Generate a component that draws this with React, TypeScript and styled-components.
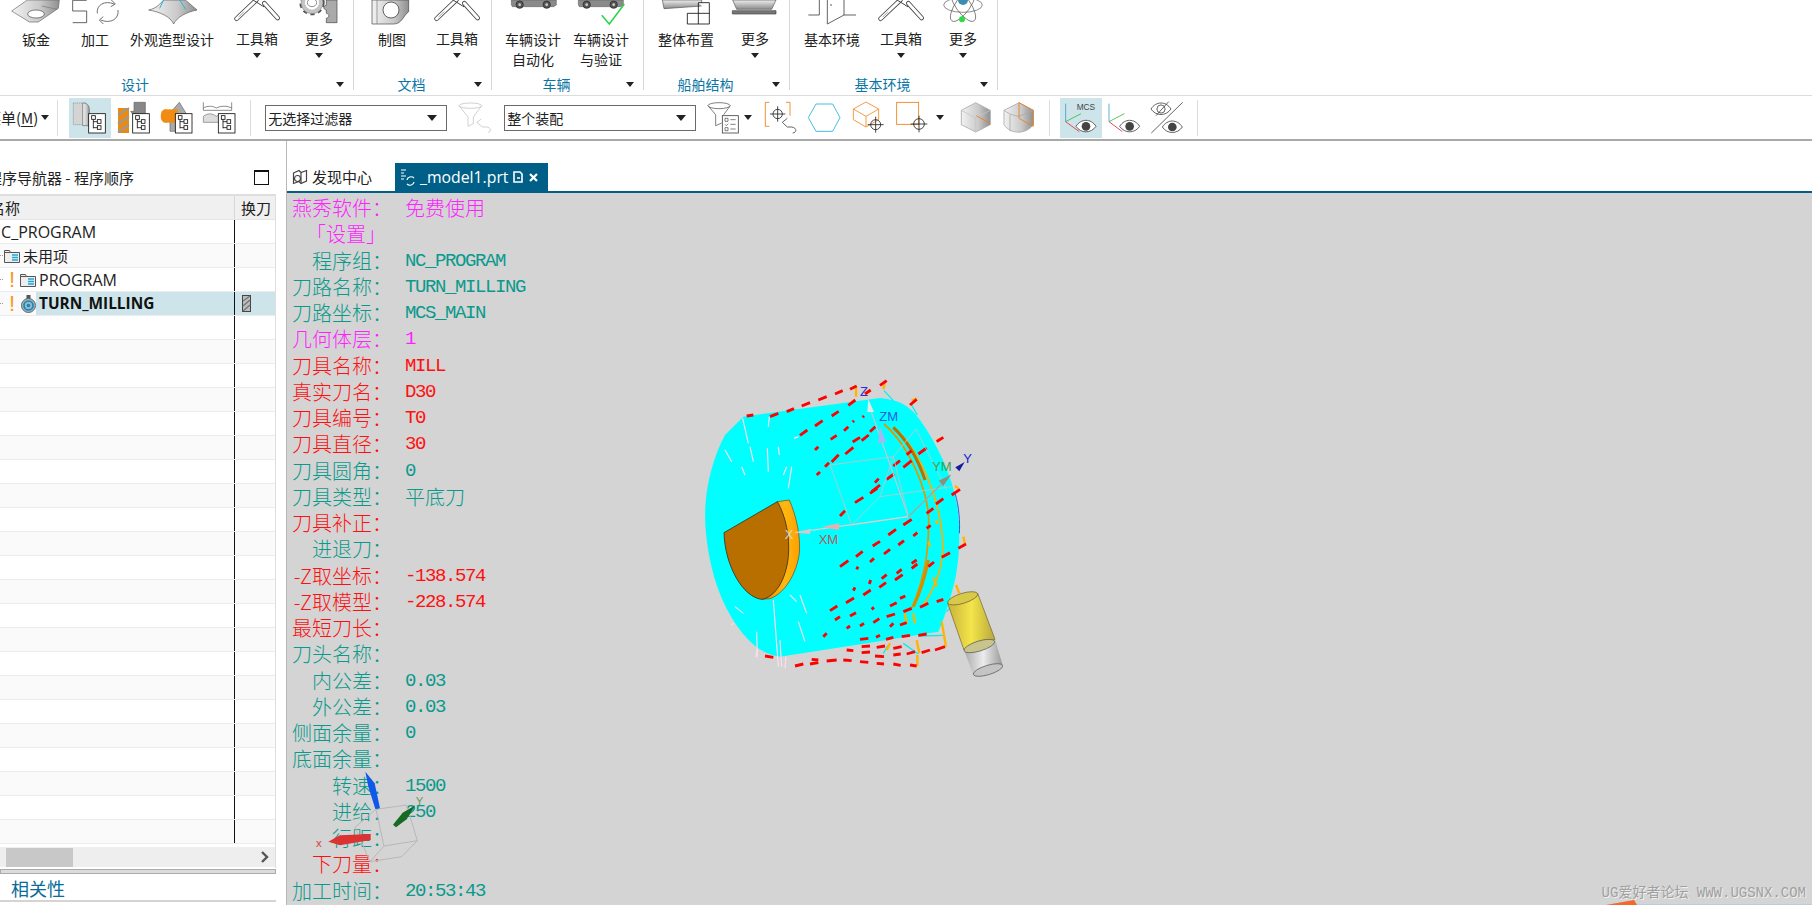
import React from "react";
import styled, { createGlobalStyle } from "styled-components";

const CJK = `"Noto Sans CJK SC", "Noto Sans", sans-serif`;
const UI = `"Open Sans", "Noto Sans CJK SC", sans-serif`;

const Global = createGlobalStyle`
  html, body { margin: 0; padding: 0; background: #fff; overflow: hidden; }
  body { font-family: ${UI}; color: #222; }
`;

const Page = styled.div`
  width: 1812px; height: 905px; overflow: hidden; display: flex; flex-direction: column; background: #fff;
`;

/* ---------- ribbon ---------- */
const Ribbon = styled.div`
  flex: none; height: 95px; display: flex; align-items: flex-start; border-bottom: 1px solid #dcdcdc; overflow: hidden;
`;
const Group = styled.section<{ $w: number; $shift?: number }>`
  flex: none; width: ${(p) => p.$w}px; height: 90px; margin-left: ${(p) => p.$shift ?? 0}px;
  border-right: 1px solid #d6d6d6; box-sizing: border-box; display: flex; flex-direction: column;
`;
const Items = styled.div<{ $pad?: number }>`
  flex: none; height: 74px; display: flex; padding-left: ${(p) => p.$pad ?? 0}px;
`;
const Item = styled.div<{ $w: number; $drop?: boolean }>`
  flex: none; width: ${(p) => p.$w}px; display: flex; flex-direction: column; align-items: center;
  font: 14px/20px ${CJK}; color: #222; white-space: nowrap; text-align: center;
  & > svg { flex: none; margin-bottom: ${(p) => (p.$drop ? -2 : -1)}px; }
`;
const Caret = styled.i<{ $mt?: number }>`
  display: block; width: 0; height: 0; margin-top: ${(p) => p.$mt ?? 5}px;
  border-left: 4px solid transparent; border-right: 4px solid transparent; border-top: 5px solid #222;
`;
const GroupFoot = styled.div`
  flex: none; height: 20px; display: flex; align-items: center;
`;
const GroupName = styled.div`
  flex: 1; text-align: center; font: 14px/20px ${CJK}; color: #0a76a6;
`;
const FootCaret = styled.div`
  flex: none; width: 22px; display: flex; justify-content: center; padding-right: 4px; box-sizing: border-box;
`;

/* ---------- toolbar ---------- */
const Toolbar = styled.div`
  flex: none; height: 43px; display: flex; align-items: center; border-bottom: 2px solid #a9a9a9;
`;
const MenuLabel = styled.div`
  flex: none; margin-left: -14px; font: 15px/20px ${CJK}; color: #222; white-space: nowrap;
  u { text-underline-offset: 2px; }
`;
const Sep = styled.div<{ $l: number; $r: number }>`
  flex: none; width: 1px; height: 36px; background: #dcdcdc; margin: 0 ${(p) => p.$r}px 0 ${(p) => p.$l}px;
`;
const ToolBtn = styled.div<{ $on?: boolean; $ml?: number }>`
  flex: none; width: 42px; height: 40px; margin-left: ${(p) => p.$ml ?? 0}px;
  background: ${(p) => (p.$on ? "#cce4ea" : "transparent")};
`;
const Select = styled.div<{ $w: number; $ml: number }>`
  flex: none; width: ${(p) => p.$w}px; height: 26px; margin-left: ${(p) => p.$ml}px; box-sizing: border-box;
  border: 1px solid #6a6a6a; display: flex; align-items: center; justify-content: space-between;
  padding: 0 9px 0 2px; font: 14px/20px ${CJK}; color: #222;
`;
const SelCaret = styled.i`
  display: block; width: 0; height: 0; border-left: 5px solid transparent; border-right: 5px solid transparent; border-top: 6px solid #222;
`;
const ToolCaret = styled.i<{ $ml: number; $mr: number }>`
  flex: none; width: 0; height: 0; margin: 0 ${(p) => p.$mr}px 0 ${(p) => p.$ml}px;
  border-left: 4px solid transparent; border-right: 4px solid transparent; border-top: 5px solid #222;
`;

/* ---------- body ---------- */
const Body = styled.div`
  flex: 1; min-height: 0; display: flex;
`;
const LeftPanel = styled.aside`
  flex: none; width: 276px; margin-right: 10px; display: flex; flex-direction: column;
`;
const TitleRow = styled.div`
  flex: none; height: 53px; display: flex; align-items: flex-end; justify-content: space-between; padding-bottom: 6px; box-sizing: border-box;
`;
const PanelTitle = styled.div`
  margin-left: -13px; font: 15px/20px ${CJK}; color: #222; white-space: nowrap;
`;
const Maximize = styled.i`
  display: block; width: 13px; height: 12px; margin: 0 7px 3px 0; border: 1px solid #111; border-top-width: 2px;
`;
const Table = styled.div`
  flex: none; height: 674px; box-sizing: border-box; border-top: 2px solid #dedede; border-right: 1px solid #dedede; display: flex; flex-direction: column;
`;
const Header = styled.div`
  flex: none; height: 24px; display: flex; background: #f0f0f0; font: 15px/24px ${CJK}; color: #222; border-bottom: 1px solid #e4e4e4; box-sizing: border-box;
`;
const HeadName = styled.div`
  flex: none; width: 234px; border-right: 1px solid #d8d8d8; overflow: hidden;
  span { margin-left: -10px; display: inline-block; }
`;
const HeadCol = styled.div`
  flex: 1; padding-left: 6px; white-space: nowrap;
`;
const Rows = styled.div`
  flex: none; display: flex; flex-direction: column;
`;
const Row = styled.div<{ $alt: boolean }>`
  flex: none; height: 24px; box-sizing: border-box; display: flex; border-bottom: 1px solid #ececec;
  background: ${(p) => (p.$alt ? "#fafafa" : "#fff")}; font: 16px/24px ${UI}; color: #222;
`;
const NameCell = styled.div`
  flex: none; width: 234px; height: 100%; display: flex; align-items: center; overflow: hidden; border-right: 1px solid #111;
`;
const ToolCell = styled.div<{ $on?: boolean }>`
  flex: 1; height: 100%; display: flex; align-items: center; padding-left: 7px; background: ${(p) => (p.$on ? "#cde5ea" : "transparent")};
`;
const Indent = styled.span<{ $w: number }>`
  flex: none; width: ${(p) => p.$w}px;
`;
const RowText = styled.span<{ $cut?: boolean }>`
  margin-left: ${(p) => (p.$cut ? -11 : 0)}px; white-space: nowrap;
`;
const RowCjk = styled.span`
  font: 15px/24px ${CJK};
`;
const Selected = styled.div`
  flex: 1; height: 100%; display: flex; align-items: center; background: #cde5ea; padding-left: 3px; font-weight: 700; font-size: 15.4px; color: #111;
`;
const Warn = styled.span`
  flex: none; width: 8px; font: 22px/23px "Liberation Sans", sans-serif; color: #f59a1b; text-align: center;
`;
const Twig = styled.span<{ $w: number }>`
  flex: none; width: ${(p) => p.$w}px; border-top: 1px dotted #999; height: 0;
`;
const ScrollBar = styled.div`
  flex: none; height: 20px; margin-top: 3px; background: #eee; display: flex; align-items: center; justify-content: space-between; padding-right: 6px;
`;
const Thumb = styled.i`
  display: block; width: 67px; height: 19px; margin: 0 0 0 6px; background: #c8c8c8;
`;
const Splitter = styled.div`
  flex: none; height: 5px; margin-top: 1px; box-sizing: border-box; border: 1px solid #ababab; background: #dcdcdc; width: 276px;
`;
const Related = styled.div`
  flex: none; height: 26px; padding-left: 11px; font: 18px/29px ${CJK}; color: #0a6c98; border-bottom: 2px solid #d4d4d4;
`;

const Work = styled.main`
  flex: 1; min-width: 0; display: flex; flex-direction: column; padding-top: 22px; box-sizing: border-box; border-left: 1px solid #b8b8b8;
`;
const Tabs = styled.div`
  flex: none; height: 30px; box-sizing: border-box; display: flex; border-bottom: 2px solid #005f87;
`;
const Tab = styled.div<{ $on?: boolean; $w: number }>`
  flex: none; width: ${(p) => p.$w}px; height: 28px; display: flex; align-items: center; gap: 4px; padding-left: 5px; box-sizing: border-box;
  background: ${(p) => (p.$on ? "#005f87" : "#fff")}; color: ${(p) => (p.$on ? "#fff" : "#222")};
  font: 15.8px/20px ${UI}; white-space: nowrap;
`;
const TabCjk = styled.span`
  font: 15px/20px ${CJK};
`;
const Viewport = styled.div`
  flex: 1; position: relative; background: #d4d4d4; overflow: hidden; padding-top: 2px; box-sizing: border-box;
`;
const InfoRow = styled.div`
  height: 26.26px; display: flex; align-items: center; padding-left: 5px; white-space: nowrap;
`;
const InfoLabel = styled.div<{ $c: string; $pad?: number }>`
  flex: none; width: 100px; padding-right: ${(p) => p.$pad ?? 0}px; box-sizing: border-box; text-align: right; color: ${(p) => p.$c};
  font: 300 20px/26px ${CJK};
`;
const InfoValue = styled.div<{ $c: string; $cjk?: boolean }>`
  margin-left: 13px; color: ${(p) => p.$c};
  font: ${(p) => (p.$cjk ? `300 20px/26px ${CJK}` : `19px/28px "Liberation Mono", monospace`)};
  letter-spacing: ${(p) => (p.$cjk ? 0 : -1.4)}px;
`;
const ModelSvg = styled.svg`
  position: absolute; left: 393px; top: 167px; width: 340px; height: 330px;
`;
const TriadSvg = styled.svg`
  position: absolute; left: -27px; top: 527px; width: 260px; height: 185px;
`;
const Watermark = styled.div`
  position: absolute; right: 6px; bottom: 4px; font: 14px/16px "Liberation Mono", "Noto Sans CJK SC", monospace; color: #a0a0a0;
  text-shadow: 1px 1px 0 #efefef; white-space: nowrap;
`;
const EdgeSvg = styled.svg`
  position: absolute; right: 0; bottom: 0; width: 206px; height: 5px;
`;

/* ---------- drawings ---------- */
const RIcon = ({ c, children }: { c: number; children: React.ReactNode }) => (
  <svg width={60} height={30} viewBox={`${c - 90} 0 180 90`} fill="none">{children}</svg>
);
const TIcon = ({ c, children }: { c: number; children: React.ReactNode }) => (
  <svg width={42} height={40} viewBox={`${c - 63} 295 126 120`} fill="none" style={{ display: "block" }}>{children}</svg>
);

const Shared = styled.svg`
  position: absolute; width: 0; height: 0;
`;
const Defs = () => (
  <Shared aria-hidden>
    <defs>
      <linearGradient id="g1" x1="0" y1="0" x2="1" y2="0">
        <stop offset="0" stopColor="#f2f2f2" /><stop offset="0.6" stopColor="#c9c9c9" /><stop offset="1" stopColor="#8f8f8f" />
      </linearGradient>
      <linearGradient id="g2" x1="0" y1="0" x2="0" y2="1">
        <stop offset="0" stopColor="#eee" /><stop offset="1" stopColor="#8a8a8a" />
      </linearGradient>
      <linearGradient id="gO" x1="0" y1="0" x2="1" y2="0">
        <stop offset="0" stopColor="#e88a00" /><stop offset="0.6" stopColor="#ffb810" /><stop offset="1" stopColor="#ffa000" />
      </linearGradient>
      <linearGradient id="gY" x1="0" y1="0" x2="1" y2="0">
        <stop offset="0" stopColor="#c9b23a" /><stop offset="0.5" stopColor="#f3e54a" /><stop offset="1" stopColor="#b9a73c" />
      </linearGradient>
      <linearGradient id="gS" x1="0" y1="0" x2="1" y2="0">
        <stop offset="0" stopColor="#aaa" /><stop offset="0.5" stopColor="#ececec" /><stop offset="1" stopColor="#999" />
      </linearGradient>
    </defs>
  </Shared>
);

const Toolbox = ({ c }: { c: number }) => {
  const d = c - 770;
  return (
    <RIcon c={c}>
      <g transform={`translate(${d} 0)`} strokeLinecap="round">
        <path d="M709 56L768 0" stroke="#444" strokeWidth="14" />
        <path d="M709 56L768 0" stroke="#fff" strokeWidth="9" />
        <path d="M792 10L832 54" stroke="#444" strokeWidth="14" />
        <path d="M792 10L832 54" stroke="#fff" strokeWidth="9" />
        <path d="M752 -4L790 20" stroke="#444" strokeWidth="3" />
        <path d="M716 50L730 36" stroke="#777" strokeWidth="2" />
      </g>
    </RIcon>
  );
};

const TreeIcon = ({ x, y }: { x: number; y: number }) => (
  <g transform={`translate(${x} ${y})`} stroke="#111" strokeWidth="2.5">
    <rect x="0" y="0" width="50" height="58" fill="#fff" />
    <path d="M14 12v32M14 24h16M14 42h16" />
    <rect x="9" y="6" width="11" height="11" fill="#fff" />
    <rect x="26" y="18" width="11" height="11" fill="#fff" />
    <rect x="26" y="36" width="11" height="11" fill="#fff" />
  </g>
);

const Crosshair = ({ x, y, r = 14 }: { x: number; y: number; r?: number }) => (
  <g stroke="#222" strokeWidth="2.5">
    <circle cx={x} cy={y} r={r} fill="none" />
    <path d={`M${x - r - 9} ${y}H${x + r + 9}M${x} ${y - r - 9}V${y + r + 9}`} />
  </g>
);

const Eye = ({ x, y }: { x: number; y: number }) => (
  <g>
    <path d={`M${x - 30} ${y}C${x - 15} ${y - 24} ${x + 15} ${y - 24} ${x + 30} ${y}C${x + 15} ${y + 22} ${x - 15} ${y + 22} ${x - 30} ${y}Z`} stroke="#444" strokeWidth="2.5" fill="#fff" />
    <circle cx={x} cy={y} r="13" fill="#444" />
  </g>
);

const FolderIcon = () => (
  <svg width={16} height={14} viewBox="0 0 16 14" fill="none" style={{ flex: "none" }}>
    <path d="M.5 13.5V1.5h5l1 2h9v10z" fill="#eee" stroke="#555" />
    <path d="M8 6h6M8 8.5h6M8 11h6" stroke="#1fa8d8" strokeWidth="1.4" />
    <path d="M.5 3.5h6" stroke="#555" />
  </svg>
);
const OpIcon = () => (
  <svg width={15} height={18} viewBox="0 0 15 18" fill="none" style={{ flex: "none" }}>
    <rect x="5.5" y="0" width="4" height="6" fill="#555" />
    <circle cx="7.5" cy="10.5" r="7" fill="#8fb9cc" stroke="#666" />
    <circle cx="7.5" cy="10.5" r="4.5" fill="none" stroke="#2482b0" strokeWidth="1.6" />
    <circle cx="7.5" cy="10.5" r="1.8" fill="#2482b0" />
  </svg>
);
const MillIcon = () => (
  <svg width={9} height={17} viewBox="0 0 9 17">
    <rect x=".5" y=".5" width="8" height="16" fill="#bdbdbd" stroke="#444" />
    <path d="M1 6L8 1M1 11L8 5M1 16L8 10" stroke="#777" strokeWidth="1.5" />
  </svg>
);

const info: { l: string; v?: string; c: string; cjk?: boolean; pad?: number }[] = [
  { l: "燕秀软件：", v: "免费使用", c: "#ff22ff", cjk: true },
  { l: "「设置」", c: "#ff22ff", pad: 6 },
  { l: "程序组：", v: "NC_PROGRAM", c: "#0a9a8c" },
  { l: "刀路名称：", v: "TURN_MILLING", c: "#0a9a8c" },
  { l: "刀路坐标：", v: "MCS_MAIN", c: "#0a9a8c" },
  { l: "几何体层：", v: "1", c: "#ff22ff" },
  { l: "刀具名称：", v: "MILL", c: "#ff1010" },
  { l: "真实刀名：", v: "D30", c: "#ff1010" },
  { l: "刀具编号：", v: "T0", c: "#ff1010" },
  { l: "刀具直径：", v: "30", c: "#ff1010" },
  { l: "刀具圆角：", v: "0", c: "#0a9a8c" },
  { l: "刀具类型：", v: "平底刀", c: "#0a9a8c", cjk: true },
  { l: "刀具补正：", c: "#ff1010" },
  { l: "进退刀：", c: "#0a9a8c" },
  { l: "-Z取坐标：", v: "-138.574", c: "#ff1010" },
  { l: "-Z取模型：", v: "-228.574", c: "#ff1010" },
  { l: "最短刀长：", c: "#ff1010" },
  { l: "刀头名称：", c: "#0a9a8c" },
  { l: "内公差：", v: "0.03", c: "#0a9a8c" },
  { l: "外公差：", v: "0.03", c: "#0a9a8c" },
  { l: "侧面余量：", v: "0", c: "#0a9a8c" },
  { l: "底面余量：", c: "#0a9a8c" },
  { l: "转速：", v: "1500", c: "#0a9a8c" },
  { l: "进给：", v: "250", c: "#0a9a8c" },
  { l: "行距：", c: "#0a9a8c" },
  { l: "下刀量：", c: "#ff1010" },
  { l: "加工时间：", v: "20:53:43", c: "#0a9a8c" },
];

const redDashes: number[][] = [
  [200,168,220,165],[270,170,295,160],[320,155,342,146],[365,138,390,128],[415,120,440,110],[465,102,488,92],[510,88,530,78],
  [555,102,572,90],[600,76,620,62],[690,135,710,118],[770,245,790,232],
  [360,226,382,210],[405,198,428,182],[455,168,476,154],[505,136,526,120],
  [405,270,415,260],[435,320,447,308],[455,306,476,284],[496,282,520,262],[518,246,540,232],[545,242,566,225],[570,215,586,200],
  [410,345,420,336],[452,238,470,226],[548,172,552,168],[492,212,505,200],[518,186,522,182],
  [570,400,592,385],[575,395,600,375],[525,428,550,412],[620,358,642,342],[640,318,660,302],[670,322,695,302],[680,284,695,272],[715,282,740,264],
  [585,368,596,356],[480,468,495,452],[670,495,695,478],[815,405,840,388],[768,432,790,416],[740,460,760,445],
  [625,525,648,508],[578,558,600,544],[528,590,548,574],[480,620,505,602],[570,606,582,595],[612,582,630,568],[655,555,672,542],[700,528,712,518],[740,505,752,496],
  [835,565,858,552],[785,592,810,578],[745,620,762,606],[695,625,712,612],[695,610,710,600],[645,660,668,644],[650,640,665,628],[598,682,618,668],
  [605,656,620,644],[550,705,572,690],[498,728,522,714],[450,752,472,738],[568,672,572,660],[520,692,525,682],[530,628,534,620],
  [660,715,676,708],[630,738,650,728],[720,742,745,730],[670,755,695,745],[770,725,790,718],[575,748,582,742],[620,770,645,762],[660,795,680,788],
  [510,768,528,758],[465,780,480,770],[540,798,552,790],[580,788,598,776],[500,805,510,798],[430,830,440,820],[630,800,640,790],
  [618,838,640,832],[665,830,690,826],[715,826,740,822],[765,870,795,860],[725,878,750,870],[680,882,705,875],
  [588,832,600,826],[540,838,565,835],[545,860,570,858],[590,862,615,858],[640,865,665,860],
  [500,870,520,872],[545,878,570,876],[585,888,612,890],[640,885,662,882],[440,903,470,900],[490,900,515,902],
  [395,898,415,900],[345,918,370,912],[390,912,415,908],[255,888,280,892],[590,910,612,912],[640,912,662,916],[690,915,710,918],[540,905,565,907],
];
const yellowSegs: number[][] = [
  [528,78,528,110],[615,65,610,88],[695,122,710,115],[770,240,785,235],[825,378,835,385],[850,530,855,552],[760,652,770,680],
  [828,675,838,700],[675,760,680,790],[700,760,705,790],[785,785,798,860],[710,840,718,880],[620,870,630,850],[712,885,712,918],[768,480,772,492],[745,545,750,560],
];
const cyanStrays: number[][] = [[612,92,640,122],[695,135,712,165],[610,880,625,855],[670,850,715,882],[715,828,790,826],[800,755,840,712]];
const paleStrays: number[][] = [
  [188,175,205,250],[268,170,265,200],[210,260,220,305],[135,270,155,305],[262,265,265,335],[185,320,195,345],[295,260,298,285],
  [355,230,342,235],[320,320,310,345],[335,320,325,385],[280,720,295,920],[360,705,380,760],[355,785,375,845],[330,705,350,725],
  [230,815,232,890],[165,740,190,760],[160,790,155,795],[300,840,305,920],[318,890,315,925],[230,870,228,892],
];

const Line = ({ s, ...r }: { s: number[] } & React.SVGProps<SVGLineElement>) => (
  <line x1={s[0]} y1={s[1]} x2={s[2]} y2={s[3]} {...r} />
);

const Model = () => (
  <ModelSvg viewBox="0 0 1020 990" fill="none">
    <path d="M190 170L600 114C650 118 690 135 720 180C770 250 815 340 832 440C842 520 838 600 825 660C810 720 795 770 775 815L560 850L300 890C270 885 245 875 222 855C170 810 130 740 105 660C85 590 72 510 76 440C80 370 100 290 135 225Z" fill="#00ffff" />
    <path d="M825 400C838 440 840 490 838 520" stroke="#2060e0" strokeWidth="3" />
    {paleStrays.map((s, i) => <Line key={i} s={s} stroke="#ffdcee" strokeWidth="3.5" />)}
    {cyanStrays.map((s, i) => <Line key={i} s={s} stroke="#00f0f0" strokeWidth="4" />)}
    <path d="M612 192C690 260 748 400 746 490C745 560 740 640 695 745" stroke="#e69500" strokeWidth="5" />
    <path d="M640 200C720 270 790 430 788 570C786 630 760 690 730 735" stroke="#ffb000" strokeWidth="5" />
    <path d="M640 202C680 240 715 300 735 360" stroke="#b87000" strokeWidth="9" />
    <path d="M745 600C735 650 720 700 700 740" stroke="#d88c00" strokeWidth="9" />
    {yellowSegs.map((s, i) => <Line key={i} s={s} stroke="#ffb400" strokeWidth="7" />)}
    {redDashes.map((s, i) => <Line key={i} s={s} stroke="#ff0000" strokeWidth="8.5" />)}
    <path d="M292 425L328 420C350 470 362 530 358 580C350 640 315 700 270 716L245 718Z" fill="url(#gO)" stroke="#5a4a20" strokeWidth="2" />
    <path d="M132 518L292 425C318 470 330 530 325 590C318 660 285 712 245 718C190 712 135 620 132 518Z" fill="#b86f00" stroke="#3a3020" strokeWidth="2.5" />
    <g stroke="#c4c4c4" strokeWidth="2.5">
      <path d="M450 315L640 290L708 207M640 290L685 470M450 315L515 495M515 495L685 470M515 495L600 410L815 380M708 207L800 390M600 410L640 290" />
    </g>
    <path d="M685 470L345 518" stroke="#d8cfd0" strokeWidth="3.5" />
    <path d="M685 470L565 130" stroke="#c6c6d6" strokeWidth="3.5" />
    <path d="M685 470L812 345" stroke="#a8a89c" strokeWidth="4" />
    <path d="M345 518L392 506L390 522Z" fill="#ccc" />
    <path d="M425 500L478 490L476 510Z" fill="#e8b0b0" />
    <path d="M565 118L582 156L562 156Z" fill="#e6e6e6" />
    <path d="M600 200L618 246L594 250Z" fill="#a9b6ee" />
    <path d="M812 345L776 362L790 378Z" fill="#8e8e80" />
    <path d="M854 306L826 322L838 334Z" fill="#1a1aa0" />
    <g fontFamily="Liberation Sans, sans-serif" fontSize="39">
      <text x="416" y="552" fill="#b65a5a">XM</text>
      <text x="314" y="536" fill="#d8d8d0">X</text>
      <text x="598" y="182" fill="#2a5ce0">ZM</text>
      <text x="540" y="107" fill="#2a30d0">Z</text>
      <text x="756" y="333" fill="#3aa04a">YM</text>
      <text x="850" y="309" fill="#2222c8">Y</text>
    </g>
    <path d="M852 870L945 838L968 915L880 945Z" fill="url(#gS)" />
    <ellipse cx="924" cy="930" rx="46" ry="14" transform="rotate(-17 924 930)" fill="#c4c4c4" stroke="#555" strokeWidth="2" />
    <path d="M803 730L893 700L945 838L852 870Z" fill="url(#gY)" stroke="#6a6030" strokeWidth="2" />
    <ellipse cx="848" cy="715" rx="47" ry="15" transform="rotate(-17 848 715)" fill="#d8c94a" stroke="#6a6030" strokeWidth="2" />
    <ellipse cx="898" cy="858" rx="48" ry="15" transform="rotate(-17 898 858)" fill="#c9c38e" stroke="#555" strokeWidth="2" />
  </ModelSvg>
);

const Triad = () => (
  <TriadSvg viewBox="0 0 780 555" fill="none">
    <path d="M285 322L348 268L440 255L472 362L425 410L330 425ZM348 268L372 378L472 362M372 378L330 425" stroke="#b8b8b8" strokeWidth="3" />
    <path d="M316 155L344 190L360 265L346 267L325 200Z" fill="#1058e8" />
    <path d="M466 256L440 298L408 322L399 314L428 278Z" fill="#176a22" />
    <path d="M205 365L240 346L332 342L332 360L240 376Z" fill="#dc3232" />
    <text x="467" y="254" fontFamily="Liberation Sans, sans-serif" fontSize="34" fill="#6a9a5a">Y</text>
    <text x="168" y="382" fontFamily="Liberation Sans, sans-serif" fontSize="34" fill="#d84040">x</text>
  </TriadSvg>
);

const rowCount = 26;

export default function App() {
  return (
    <Page>
      <Global />
      <Defs />
      <Ribbon>
        <Group $w={415} $shift={-61}>
          <Items $pad={61}>
            <Item $w={72}>
              <RIcon c={108}>
                <path d="M35 33L82 0H178L175 25L115 66H88Z" fill="url(#g1)" stroke="#666" strokeWidth="2" />
                <ellipse cx="108" cy="42" rx="25" ry="12" fill="#fff" stroke="#444" strokeWidth="2" />
                <path d="M125 18L172 28" stroke="#777" strokeWidth="2" />
              </RIcon>
              钣金
            </Item>
            <Item $w={46}>
              <RIcon c={285}>
                <path d="M260 1H218V33H260V68H218" stroke="#444" strokeWidth="2.5" />
                <path d="M292 40C288 15 315 0 342 12M354 30C358 58 330 72 302 60" stroke="#555" strokeWidth="2.5" />
                <path d="M334 0L346 12L332 20M310 50L298 60L310 72" stroke="#555" strokeWidth="2.5" />
              </RIcon>
              加工
            </Item>
            <Item $w={108}>
              <RIcon c={515}>
                <path d="M445 30C470 25 480 10 490 0H555L590 30C560 36 530 50 520 72C510 50 480 36 445 30Z" fill="url(#g1)" stroke="#555" strokeWidth="2" />
                <path d="M490 0L478 25M538 0L556 28" stroke="#22b8d8" strokeWidth="3" />
              </RIcon>
              外观造型设计
            </Item>
            <Item $w={62} $drop><Toolbox c={770} />工具箱<Caret /></Item>
            <Item $w={62} $drop>
              <RIcon c={958}>
                <circle cx="937" cy="8" r="30" stroke="#555" strokeWidth="16" strokeDasharray="11 9" />
                <circle cx="937" cy="8" r="27" stroke="#c4c4c4" strokeWidth="12" />
                <circle cx="937" cy="8" r="33" stroke="#555" strokeWidth="1" />
                <ellipse cx="937" cy="8" rx="14" ry="12" fill="#fff" stroke="#555" strokeWidth="2" />
                <path d="M980 0H1012V68H980V55C990 52 990 42 980 40V30C970 28 970 18 980 16Z" fill="#aaa" stroke="#444" strokeWidth="2" />
              </RIcon>
              更多<Caret />
            </Item>
          </Items>
          <GroupFoot><GroupName>设计</GroupName><FootCaret><Caret $mt={0} /></FootCaret></GroupFoot>
        </Group>
        <Group $w={138}>
          <Items>
            <Item $w={76}>
              <RIcon c={1175}>
                <path d="M1115 0H1225V35C1210 45 1205 72 1180 72H1115Z" fill="url(#g1)" stroke="#444" strokeWidth="2" />
                <circle cx="1172" cy="30" r="24" fill="#fff" stroke="#444" strokeWidth="2.5" />
                <path d="M1130 0V72" stroke="#777" strokeWidth="2" />
              </RIcon>
              制图
            </Item>
            <Item $w={54} $drop><Toolbox c={1372} />工具箱<Caret /></Item>
          </Items>
          <GroupFoot><GroupName>文档</GroupName><FootCaret><Caret $mt={0} /></FootCaret></GroupFoot>
        </Group>
        <Group $w={152}>
          <Items $pad={6}>
            <Item $w={70}>
              <RIcon c={160}>
                <path d="M95 0H230V15L222 20H98L95 14Z" fill="#8a8a8a" stroke="#555" strokeWidth="1.5" />
                <circle cx="120" cy="14" r="11" fill="#555" stroke="#222" strokeWidth="2" /><circle cx="120" cy="14" r="4" fill="#ccc" />
                <circle cx="201" cy="14" r="11" fill="#555" stroke="#222" strokeWidth="2" /><circle cx="201" cy="14" r="4" fill="#ccc" />
              </RIcon>
              车辆设计<br />自动化
            </Item>
            <Item $w={66}>
              <RIcon c={363}>
                <path d="M295 0H430V15L422 20H298L295 14Z" fill="#8a8a8a" stroke="#555" strokeWidth="1.5" />
                <circle cx="320" cy="14" r="11" fill="#555" stroke="#222" strokeWidth="2" /><circle cx="320" cy="14" r="4" fill="#ccc" />
                <circle cx="401" cy="14" r="11" fill="#555" stroke="#222" strokeWidth="2" /><circle cx="401" cy="14" r="4" fill="#ccc" />
                <path d="M365 46L388 72L433 12" stroke="#27d645" strokeWidth="4.5" />
              </RIcon>
              车辆设计<br />与验证
            </Item>
          </Items>
          <GroupFoot><GroupName>车辆</GroupName><FootCaret><Caret $mt={0} /></FootCaret></GroupFoot>
        </Group>
        <Group $w={146}>
          <Items>
            <Item $w={84}>
              <RIcon c={618}>
                <path d="M547 0H665V18L552 26Z" fill="url(#g2)" stroke="#555" strokeWidth="2" />
                <path d="M655 8H688V72H622V40H688M655 8V72" stroke="#111" strokeWidth="2.5" fill="#fff" />
              </RIcon>
              整体布置
            </Item>
            <Item $w={54} $drop>
              <RIcon c={825}>
                <path d="M758 0H888L875 28H770Z" fill="url(#g2)" stroke="#555" strokeWidth="2" />
                <path d="M757 32H888V42H757Z" fill="#777" stroke="#444" strokeWidth="2" />
              </RIcon>
              更多<Caret />
            </Item>
          </Items>
          <GroupFoot><GroupName>船舶结构</GroupName><FootCaret><Caret $mt={0} /></FootCaret></GroupFoot>
        </Group>
        <Group $w={208}>
          <Items>
            <Item $w={84}>
              <RIcon c={1056}>
                <path d="M985 45H1018V0M1042 0V72L1092 45V0M1092 45H1128" stroke="#444" strokeWidth="2.5" />
                <circle cx="1053" cy="15" r="2.5" fill="#444" />
              </RIcon>
              基本环境
            </Item>
            <Item $w={54} $drop><Toolbox c={901 * 3 - 1440} />工具箱<Caret /></Item>
            <Item $w={70} $drop>
              <RIcon c={1450}>
                <ellipse cx="1450" cy="15" rx="58" ry="22" stroke="#555" strokeWidth="2" />
                <ellipse cx="1450" cy="15" rx="58" ry="22" transform="rotate(55 1450 15)" stroke="#555" strokeWidth="2" />
                <ellipse cx="1450" cy="15" rx="58" ry="22" transform="rotate(-55 1450 15)" stroke="#555" strokeWidth="2" />
                <circle cx="1450" cy="0" r="15" fill="#3a8db0" />
                <circle cx="1447" cy="58" r="9" fill="#2fd94a" />
              </RIcon>
              更多<Caret />
            </Item>
          </Items>
          <GroupFoot><GroupName>基本环境</GroupName><FootCaret><Caret $mt={0} /></FootCaret></GroupFoot>
        </Group>
      </Ribbon>

      <Toolbar>
        <MenuLabel>菜单(<u>M</u>)</MenuLabel>
        <ToolCaret $ml={3} $mr={0} />
        <Sep $l={8} $r={11} />
        <ToolBtn $on>
          <TIcon c={270}>
            <path d="M220 310H258V375H220Z" fill="#d4d4d4" stroke="#777" strokeWidth="2" strokeDasharray="3 3" />
            <path d="M248 310C262 310 268 318 268 330V378H248Z" fill="url(#g1)" stroke="#666" strokeWidth="2" />
            <TreeIcon x={266} y={342} />
          </TIcon>
        </ToolBtn>
        <ToolBtn $ml={1}>
          <TIcon c={395}>
            <path d="M350 325H383V400H350Z" fill="#e98a17" />
            <path d="M350 345L383 325M350 372L383 350M350 398L383 375" stroke="#999" strokeWidth="6" />
            <path d="M388 335H398V308H432V345H395Z" fill="#888" stroke="#666" strokeWidth="2" />
            <TreeIcon x={394} y={342} />
          </TIcon>
        </ToolBtn>
        <ToolBtn $ml={1}>
          <TIcon c={530}>
            <path d="M512 395V340L540 308L578 370L560 395Z" fill="#aaa" stroke="#666" strokeWidth="2" />
            <ellipse cx="497" cy="349" rx="13" ry="20" fill="#f08c12" />
            <path d="M497 329H535V369H497Z" fill="#f08c12" />
            <TreeIcon x={528} y={342} />
          </TIcon>
        </ToolBtn>
        <ToolBtn $ml={1}>
          <TIcon c={660}>
            <path d="M613 308V332H698V308" stroke="#555" strokeWidth="2" />
            <path d="M613 325C625 318 640 318 652 325C665 318 685 318 698 325" stroke="#555" strokeWidth="2" />
            <path d="M613 350C625 340 640 340 652 350C665 340 685 340 698 350V368H613Z" fill="#ddd" stroke="#777" strokeWidth="2" />
            <TreeIcon x={658} y={342} />
          </TIcon>
        </ToolBtn>
        <Sep $l={10} $r={0} />
        <Select $w={182} $ml={14}>无选择过滤器<SelCaret /></Select>
        <ToolBtn $ml={7}>
          <TIcon c={1425}>
            <ellipse cx="1411" cy="318" rx="34" ry="8" stroke="#c8c8c8" strokeWidth="2.5" />
            <path d="M1377 318L1404 352V380L1420 372V352L1445 318" stroke="#c8c8c8" strokeWidth="2.5" />
            <path d="M1430 368L1448 382H1462C1474 384 1474 398 1464 398M1430 368L1444 358" stroke="#c8c8c8" strokeWidth="2.5" />
          </TIcon>
        </ToolBtn>
        <Select $w={192} $ml={8}>整个装配<SelCaret /></Select>
        <ToolBtn $ml={6}>
          <TIcon c={730}>
            <ellipse cx="718" cy="318" rx="33" ry="9" stroke="#666" strokeWidth="2.5" />
            <path d="M685 318L708 345V378L726 370" stroke="#666" strokeWidth="2.5" />
            <path d="M752 318L732 345" stroke="#666" strokeWidth="2.5" />
            <rect x="728" y="348" width="48" height="52" fill="#fff" stroke="#444" strokeWidth="2.5" />
            <path d="M736 356h9v9h-9zM736 384h9v9h-9zM752 360h16M752 374h16M752 388h16M736 374l4 4 6-6" stroke="#444" strokeWidth="2" />
          </TIcon>
        </ToolBtn>
        <ToolCaret $ml={0} $mr={8} />
        <ToolBtn>
          <TIcon c={903}>
            <path d="M868 308H856V380H868M918 308H930V348" stroke="#ee7d11" strokeWidth="2.5" />
            <Crosshair x={893} y={343} r={14} />
            <path d="M907 368L922 356M907 368L922 382H935C950 384 952 398 938 400" stroke="#444" strokeWidth="2.5" />
          </TIcon>
        </ToolBtn>
        <ToolBtn $ml={1}>
          <TIcon c={1032}>
            <path d="M1008 313H1058L1080 354L1058 395H1008L985 354Z" stroke="#1fb3d8" strokeWidth="2.5" />
          </TIcon>
        </ToolBtn>
        <ToolBtn $ml={3}>
          <TIcon c={1167}>
            <path d="M1120 328L1158 307L1196 328V360L1158 382L1120 360ZM1120 328L1158 350L1196 328M1158 350V382" stroke="#ee8a22" strokeWidth="2.5" />
            <Crosshair x={1187} y={375} r={15} />
          </TIcon>
        </ToolBtn>
        <ToolBtn $ml={1}>
          <TIcon c={1295}>
            <rect x="1249" y="308" width="66" height="66" stroke="#ee7d11" strokeWidth="2.5" />
            <Crosshair x={1316} y={373} r={16} />
          </TIcon>
        </ToolBtn>
        <ToolCaret $ml={3} $mr={11} />
        <ToolBtn>
          <TIcon c={825}>
            <path d="M781 332L824 309L868 332V375L824 397L781 375Z" fill="url(#g1)" stroke="#aaa" strokeWidth="2.5" />
            <path d="M781 332L824 355L868 332M824 355V397" stroke="#c4c4c4" strokeWidth="2.5" />
            <path d="M826 348L868 372" stroke="#ee7d11" strokeWidth="2.5" />
          </TIcon>
        </ToolBtn>
        <ToolBtn $ml={1}>
          <TIcon c={955}>
            <path d="M910 332L955 309L998 332V375C975 405 930 405 910 375Z" fill="url(#g1)" stroke="#aaa" strokeWidth="2.5" />
            <path d="M910 332C930 345 940 348 955 350L998 332M928 345V395" stroke="#aaa" strokeWidth="2.5" />
            <path d="M955 309V356L998 380V332Z" stroke="#ee7d11" strokeWidth="2.5" />
          </TIcon>
        </ToolBtn>
        <Sep $l={9} $r={10} />
        <ToolBtn $on>
          <TIcon c={1140}>
            <path d="M1094 312V366" stroke="#3aa0c8" strokeWidth="2.5" />
            <path d="M1094 366L1140 342" stroke="#3ab93a" strokeWidth="2.5" />
            <path d="M1094 366L1135 396" stroke="#e8283c" strokeWidth="2.5" />
            <Eye x={1155} y={380} />
            <text x="1127" y="332" fontFamily="Liberation Sans, sans-serif" fontSize="25" fill="#444">MCS</text>
          </TIcon>
        </ToolBtn>
        <ToolBtn $ml={1}>
          <TIcon c={1270}>
            <path d="M1225 312V366" stroke="#3aa0c8" strokeWidth="2.5" />
            <path d="M1225 366L1271 342" stroke="#3ab93a" strokeWidth="2.5" />
            <path d="M1225 366L1265 396" stroke="#e8283c" strokeWidth="2.5" />
            <Eye x={1287} y={380} />
          </TIcon>
        </ToolBtn>
        <ToolBtn $ml={1}>
          <TIcon c={1398}>
            <Eye x={1380} y={328} />
            <circle cx="1380" cy="328" r="12" fill="#fff" stroke="#444" strokeWidth="2" />
            <path d="M1365 348L1403 306" stroke="#444" strokeWidth="2.5" />
            <Eye x={1414} y={382} />
            <path d="M1351 400L1445 308" stroke="#444" strokeWidth="2.5" />
          </TIcon>
        </ToolBtn>
        <Sep $l={9} $r={0} />
      </Toolbar>

      <Body>
        <LeftPanel>
          <TitleRow><PanelTitle>程序导航器 - 程序顺序</PanelTitle><Maximize /></TitleRow>
          <Table>
            <Header>
              <HeadName><span>名称</span></HeadName>
              <HeadCol>换刀</HeadCol>
            </Header>
            <Rows>
              {Array.from({ length: rowCount }).map((_, i) => (
                <Row key={i} $alt={i % 2 === 1}>
                  <NameCell>
                    {i === 0 && <RowText $cut>NC_PROGRAM</RowText>}
                    {i === 1 && <><Twig $w={3} /><Indent $w={1} /><FolderIcon /><Indent $w={3} /><RowCjk>未用项</RowCjk></>}
                    {i === 2 && <><Twig $w={3} /><Indent $w={5} /><Warn>!</Warn><Indent $w={4} /><FolderIcon /><Indent $w={3} /><RowText>PROGRAM</RowText></>}
                    {i === 3 && <><Twig $w={3} /><Indent $w={5} /><Warn>!</Warn><Indent $w={5} /><OpIcon /><Selected>TURN_MILLING</Selected></>}
                  </NameCell>
                  <ToolCell $on={i === 3}>{i === 3 && <MillIcon />}</ToolCell>
                </Row>
              ))}
            </Rows>
            <ScrollBar>
              <Thumb />
              <svg width={8} height={12} viewBox="0 0 8 12"><path d="M1 1l5 5-5 5" stroke="#555" strokeWidth="2.4" fill="none" /></svg>
            </ScrollBar>
          </Table>
          <Splitter />
          <Related>相关性</Related>
        </LeftPanel>

        <Work>
          <Tabs>
            <Tab $w={108}>
              <svg width={16} height={16} viewBox="0 0 16 16" fill="none" stroke="#444" strokeWidth="1.2">
                <path d="M1.5 4L7 1.5L9 3.5L14.5 1.5V12L9 14.5L7 12.5L1.5 14.5Z" />
                <circle cx="5.5" cy="9.5" r="3" /><path d="M9 3.5V14" />
              </svg>
              <TabCjk>发现中心</TabCjk>
            </Tab>
            <Tab $on $w={153}>
              <svg width={16} height={17} viewBox="0 0 16 17" fill="none" stroke="#fff" strokeWidth="1.2">
                <path d="M1 1h5M1 4h3M1 7h5M1 10h3" />
                <path d="M7 11a4 3.5 0 0 1 7-2M14 13a4 3.5 0 0 1-7 2" />
              </svg>
              <span>_model1.prt</span>
              <svg width={10} height={12} viewBox="0 0 10 12" fill="none" stroke="#fff" strokeWidth="1.6">
                <path d="M1 1h6l2 2v8H1zM4 7h3" />
              </svg>
              <svg width={9} height={9} viewBox="0 0 9 9" stroke="#fff" strokeWidth="2.2" style={{ marginLeft: 2 }}>
                <path d="M1 1l7 7M8 1l-7 7" />
              </svg>
            </Tab>
          </Tabs>
          <Viewport>
            {info.map((r, i) => (
              <InfoRow key={i}>
                <InfoLabel $c={r.c} $pad={r.pad}>{r.l}</InfoLabel>
                {r.v && <InfoValue $c={r.c} $cjk={r.cjk}>{r.v}</InfoValue>}
              </InfoRow>
            ))}
            <Model />
            <Triad />
            <Watermark>UG爱好者论坛 WWW.UGSNX.COM</Watermark>
            <EdgeSvg viewBox="0 0 206 5">
              <path d="M0 5L28 0L31 4L206 4V5Z" fill="#b9cde2" />
              <path d="M0 5L28 0L31 5Z" fill="#f4682a" />
            </EdgeSvg>
          </Viewport>
        </Work>
      </Body>
    </Page>
  );
}
